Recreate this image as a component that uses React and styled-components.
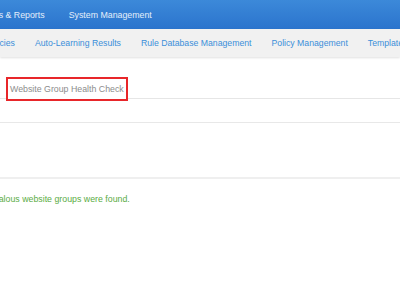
import React from "react";
import styled, { createGlobalStyle } from "styled-components";

const GlobalStyle = createGlobalStyle`
  html, body {
    margin: 0;
    padding: 0;
    background: #fff;
    overflow: hidden;
  }
  body {
    font-family: "Liberation Sans", Arial, sans-serif;
  }
`;

const Page = styled.div`
  width: 400px;
  height: 300px;
  overflow: hidden;
  background: #fff;
`;

const TopNav = styled.div`
  height: 29px;
  background: linear-gradient(#3c89d9, #2b74cd);
  display: flex;
  align-items: center;
  gap: 24px;
  white-space: nowrap;
`;

const TopItem = styled.span`
  flex: none;
  font-size: 8.8px;
  color: #e4eefa;
  margin-left: ${(p) => (p.$offset ? `${p.$offset}px` : "0")};
`;

const SubNav = styled.div`
  height: 28px;
  background: #f1f1f1;
  box-shadow: 0 1px 2px rgba(0, 0, 0, 0.12);
  display: flex;
  align-items: center;
  gap: 20px;
  white-space: nowrap;
  position: relative;
`;

const SubItem = styled.span`
  flex: none;
  font-size: 8.7px;
  color: #3b8fd9;
  margin-left: ${(p) => (p.$offset ? `${p.$offset}px` : "0")};
`;

const TabBar = styled.div`
  margin-top: 20px;
  height: 21px;
  border-bottom: 1px solid #e6e6e6;
  display: flex;
  align-items: flex-start;
  padding-left: 6px;
`;

const Tab = styled.div`
  height: 20px;
  padding: 0 2px;
  border: 2px solid #e8262a;
  background: #fff;
  display: flex;
  align-items: center;
  font-size: 8.8px;
  color: #8c8c8c;
  white-space: nowrap;
`;

const Toolbar = styled.div`
  height: 23px;
  border-bottom: 1px solid #e8e8e8;
`;

const Panel = styled.div`
  height: 54px;
  border-bottom: 2.5px solid #efefef;
`;

const Message = styled.div`
  padding-top: 15px;
  font-size: 8.8px;
  color: #5aac44;
  white-space: nowrap;
  margin-left: -37px;
`;

export default function App() {
  return (
    <Page>
      <GlobalStyle />
      <TopNav>
        <TopItem $offset={-16}>Logs &amp; Reports</TopItem>
        <TopItem>System Management</TopItem>
      </TopNav>
      <SubNav>
        <SubItem $offset={-15}>Policies</SubItem>
        <SubItem>Auto-Learning Results</SubItem>
        <SubItem>Rule Database Management</SubItem>
        <SubItem>Policy Management</SubItem>
        <SubItem>Template Management</SubItem>
      </SubNav>
      <TabBar>
        <Tab>Website Group Health Check</Tab>
      </TabBar>
      <Toolbar />
      <Panel />
      <Message>No anomalous website groups were found.</Message>
    </Page>
  );
}
